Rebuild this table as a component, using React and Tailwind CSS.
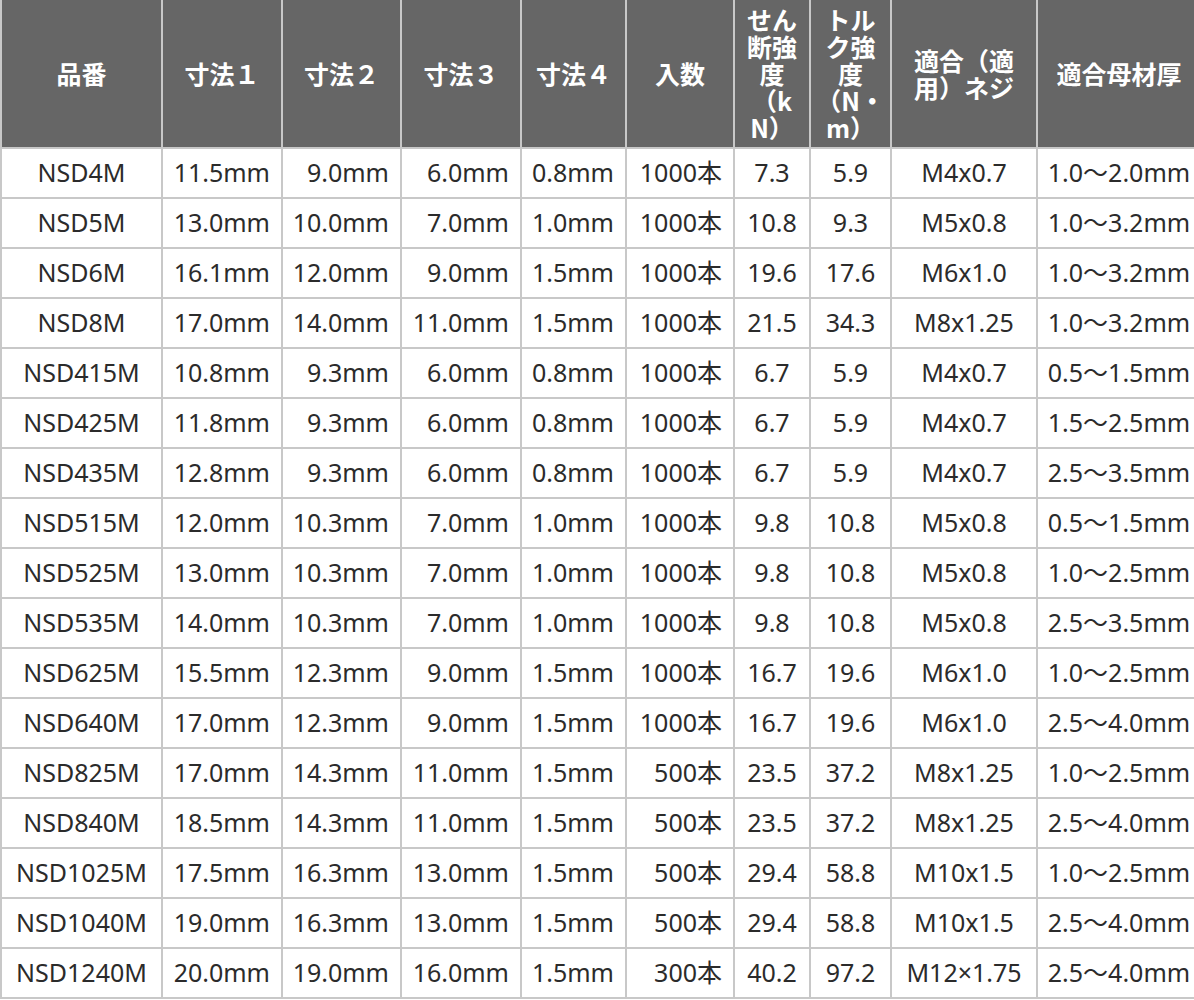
import React from "react";

const headers = [
  ["品番"],
  ["寸法１"],
  ["寸法２"],
  ["寸法３"],
  ["寸法４"],
  ["入数"],
  ["せん", "断強", "度", "（k", "N）"],
  ["トル", "ク強", "度", "（N・", "m）"],
  ["適合（適", "用）ネジ"],
  ["適合母材厚"],
];

const rows = [
  ["NSD4M", "11.5mm", "9.0mm", "6.0mm", "0.8mm", "1000本", "7.3", "5.9", "M4x0.7", "1.0〜2.0mm"],
  ["NSD5M", "13.0mm", "10.0mm", "7.0mm", "1.0mm", "1000本", "10.8", "9.3", "M5x0.8", "1.0〜3.2mm"],
  ["NSD6M", "16.1mm", "12.0mm", "9.0mm", "1.5mm", "1000本", "19.6", "17.6", "M6x1.0", "1.0〜3.2mm"],
  ["NSD8M", "17.0mm", "14.0mm", "11.0mm", "1.5mm", "1000本", "21.5", "34.3", "M8x1.25", "1.0〜3.2mm"],
  ["NSD415M", "10.8mm", "9.3mm", "6.0mm", "0.8mm", "1000本", "6.7", "5.9", "M4x0.7", "0.5〜1.5mm"],
  ["NSD425M", "11.8mm", "9.3mm", "6.0mm", "0.8mm", "1000本", "6.7", "5.9", "M4x0.7", "1.5〜2.5mm"],
  ["NSD435M", "12.8mm", "9.3mm", "6.0mm", "0.8mm", "1000本", "6.7", "5.9", "M4x0.7", "2.5〜3.5mm"],
  ["NSD515M", "12.0mm", "10.3mm", "7.0mm", "1.0mm", "1000本", "9.8", "10.8", "M5x0.8", "0.5〜1.5mm"],
  ["NSD525M", "13.0mm", "10.3mm", "7.0mm", "1.0mm", "1000本", "9.8", "10.8", "M5x0.8", "1.0〜2.5mm"],
  ["NSD535M", "14.0mm", "10.3mm", "7.0mm", "1.0mm", "1000本", "9.8", "10.8", "M5x0.8", "2.5〜3.5mm"],
  ["NSD625M", "15.5mm", "12.3mm", "9.0mm", "1.5mm", "1000本", "16.7", "19.6", "M6x1.0", "1.0〜2.5mm"],
  ["NSD640M", "17.0mm", "12.3mm", "9.0mm", "1.5mm", "1000本", "16.7", "19.6", "M6x1.0", "2.5〜4.0mm"],
  ["NSD825M", "17.0mm", "14.3mm", "11.0mm", "1.5mm", "500本", "23.5", "37.2", "M8x1.25", "1.0〜2.5mm"],
  ["NSD840M", "18.5mm", "14.3mm", "11.0mm", "1.5mm", "500本", "23.5", "37.2", "M8x1.25", "2.5〜4.0mm"],
  ["NSD1025M", "17.5mm", "16.3mm", "13.0mm", "1.5mm", "500本", "29.4", "58.8", "M10x1.5", "1.0〜2.5mm"],
  ["NSD1040M", "19.0mm", "16.3mm", "13.0mm", "1.5mm", "500本", "29.4", "58.8", "M10x1.5", "2.5〜4.0mm"],
  ["NSD1240M", "20.0mm", "19.0mm", "16.0mm", "1.5mm", "300本", "40.2", "97.2", "M12×1.75", "2.5〜4.0mm"],
];

const align = [
  "justify-center",
  "justify-end pr-[11px]",
  "justify-end pr-[11px]",
  "justify-end pr-[11px]",
  "justify-end pr-[11px]",
  "justify-end pr-[11px]",
  "justify-center",
  "justify-center",
  "justify-center",
  "justify-center",
];

export default function App() {
  return (
    <div className="w-[1194px] h-[1000px] overflow-hidden bg-white">
      <div className="grid w-max grid-cols-[159px_118px_117px_118px_103px_106px_74px_79px_144px_162px] grid-rows-[147px] auto-rows-[48px] gap-[2px] bg-[#c8c8c8] pl-[2px] pb-[2px]">
        {headers.map((h, i) => (
          <div
            key={i}
            className="flex items-center justify-center bg-[#666666] text-center text-[25px] font-bold leading-[27px] text-white font-['Noto_Sans_CJK_JP',sans-serif]"
          >
            <div>
              {h.map((l, j) => (
                <div key={j} className="whitespace-nowrap">{l}</div>
              ))}
            </div>
          </div>
        ))}
        {rows.map((r, ri) =>
          r.map((c, ci) => (
            <div
              key={ri + "-" + ci}
              className={
                "flex items-center whitespace-nowrap bg-white text-[25px] text-[#2b2b2b] font-['Noto_Sans','Noto_Sans_CJK_JP',sans-serif] " +
                align[ci]
              }
            >
              {c}
            </div>
          ))
        )}
      </div>
    </div>
  );
}
